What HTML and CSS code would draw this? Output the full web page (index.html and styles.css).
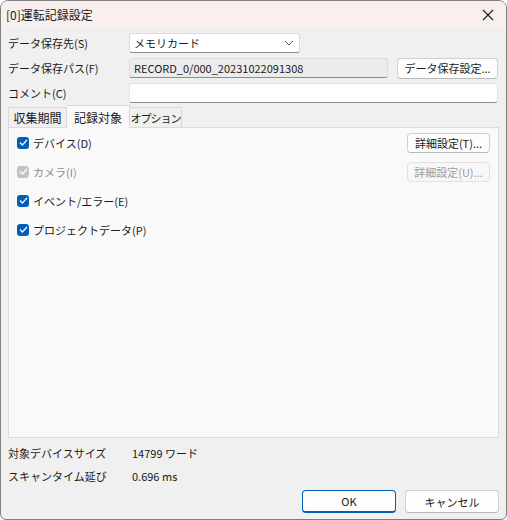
FILE: index.html
```html
<!DOCTYPE html>
<html lang="ja">
<head>
<meta charset="utf-8">
<link rel="stylesheet" href="styles.css">
</head>
<body>
<div class="window">
  <div class="titlebar">
    <span class="title">[0]運転記録設定</span>
    <svg class="close" width="12" height="12" viewBox="0 0 12 12"><path d="M1 1L11 11M11 1L1 11" stroke="#1a1a1a" stroke-width="1.1" fill="none"/></svg>
  </div>
  <div class="content">
    <div class="row r1">
      <span class="label">データ保存先(S)</span>
      <div class="combo"><span>メモリカード</span>
        <svg class="chev" width="10" height="6" viewBox="0 0 10 6"><path d="M1 1L5 5L9 1" stroke="#606060" stroke-width="1" fill="none"/></svg>
      </div>
    </div>
    <div class="row r2">
      <span class="label">データ保存パス(F)</span>
      <div class="field ro">RECORD_0/000_20231022091308</div>
      <button class="btn wide">データ保存設定...</button>
    </div>
    <div class="row r3">
      <span class="label">コメント(C)</span>
      <div class="field full"></div>
    </div>
    <div class="tabs">
      <div class="tab first">収集期間</div>
      <div class="tab sel">記録対象</div>
      <div class="tab last">オプション</div>
    </div>
    <div class="panel">
      <div class="crow">
        <span class="cb"><svg width="9" height="7" viewBox="0 0 9 7"><path d="M1 3.5L3.4 6L8 1" stroke="#fff" stroke-width="1.2" fill="none"/></svg></span>
        <span class="clabel">デバイス(D)</span>
        <button class="btn small">詳細設定(T)...</button>
      </div>
      <div class="crow dis">
        <span class="cb"><svg width="9" height="7" viewBox="0 0 9 7"><path d="M1 3.5L3.4 6L8 1" stroke="#fff" stroke-width="1.2" fill="none"/></svg></span>
        <span class="clabel">カメラ(I)</span>
        <button class="btn small disabled">詳細設定(U)...</button>
      </div>
      <div class="crow">
        <span class="cb"><svg width="9" height="7" viewBox="0 0 9 7"><path d="M1 3.5L3.4 6L8 1" stroke="#fff" stroke-width="1.2" fill="none"/></svg></span>
        <span class="clabel">イベント/エラー(E)</span>
      </div>
      <div class="crow">
        <span class="cb"><svg width="9" height="7" viewBox="0 0 9 7"><path d="M1 3.5L3.4 6L8 1" stroke="#fff" stroke-width="1.2" fill="none"/></svg></span>
        <span class="clabel">プロジェクトデータ(P)</span>
      </div>
    </div>
    <div class="info first-info">
      <span class="ilabel">対象デバイスサイズ</span><span>14799 ワード</span>
    </div>
    <div class="info">
      <span class="ilabel">スキャンタイム延び</span><span>0.696 ms</span>
    </div>
    <div class="footer">
      <button class="btn dlg ok">OK</button>
      <button class="btn dlg">キャンセル</button>
    </div>
  </div>
</div>
</body>
</html>
```
FILE: styles.css
```css
* { box-sizing: border-box; }
html, body { margin: 0; padding: 0; background: #ffffff; }
body {
  width: 507px; height: 520px; overflow: hidden;
  font-family: "Noto Sans CJK JP", "Noto Sans", sans-serif;
  font-size: 11px; color: #1a1a1a;
}
.window {
  width: 507px; height: 520px;
  border: 1px solid #7f7f7f;
  border-radius: 8px 8px 6px 6px;
  background: #f0f0f0;
  overflow: hidden;
  display: flex; flex-direction: column;
}
.titlebar {
  height: 27px; flex: none;
  background: #f9efee;
  display: flex; align-items: center; justify-content: space-between;
  padding: 0 10px 0 5px;
}
.title { font-size: 12px; color: #1a1a1a; }
.close { margin-right: 2px; }
.content { padding: 5px 7px 0 7px; display: flex; flex-direction: column; }
.row { display: flex; align-items: center; height: 20px; }
.r2, .r3 { margin-top: 5px; }
.label { width: 121px; flex: none; }
.combo {
  width: 171px; height: 20px;
  background: #fff; border: 1px solid #dadada; border-bottom-color: #8c8c8c;
  border-radius: 3px;
  display: flex; align-items: center; justify-content: space-between;
  padding: 0 4px 0 4px;
}
.chev { margin-right: 1px; }
.field {
  height: 20px; background: #fff;
  border: 1px solid #e3e3e3; border-bottom-color: #8c8c8c;
  border-radius: 3px; padding: 0 4px; display: flex; align-items: center;
}
.field.ro { width: 259px; background: #ececec; border-color: #dcdcdc; border-bottom-color: #8c8c8c; }
.field.full { width: 369px; }
.btn {
  font-family: inherit; font-size: 11px; color: #1a1a1a;
  background: #fdfdfd; border: 1px solid #d0d0d0; border-bottom-color: #b8b8b8;
  border-radius: 4px; padding: 0; margin: 0;
  display: flex; align-items: center; justify-content: center;
  white-space: nowrap;
}
.btn.wide { width: 101px; height: 21px; margin-left: 9px; }
.tabs { display: flex; align-items: flex-end; height: 22px; margin-top: 2px; position: relative; z-index: 1; }
.tab {
  height: 20px; padding: 0; background: #f0f0f0;
  border: 1px solid #d9d9d9; border-bottom: none; border-left: none;
  display: flex; align-items: center; justify-content: center;
  font-size: 12px; white-space: nowrap;
}
.tab.first { border-left: 1px solid #d9d9d9; width: 59px; }
.tab.sel { height: 23px; background: #f9f9f9; width: 63px; margin-bottom: -1px; }
.tab.last { width: 52px; font-size: 11px; letter-spacing: -1px; }
.panel {
  width: 491px; height: 311px;
  background: #f9f9f9; border: 1px solid #dcdcdc;
  padding: 0 8px 0 8px;
  display: flex; flex-direction: column;
}
.crow { display: flex; align-items: center; height: 29px; }
.cb {
  width: 12px; height: 12px; border-radius: 3px; background: #005fb8;
  display: flex; align-items: center; justify-content: center; flex: none;
}
.clabel { margin-left: 4px; flex: 1; }
.dis .cb { background: #c4c4c4; }
.dis .clabel { color: #8d8d8d; }
.btn.small { width: 83px; height: 20px; }
.btn.disabled { color: #9d9d9d; border-color: #e2e2e2; background: #f7f7f7; }
.info { display: flex; align-items: center; height: 23px; }
.first-info { margin-top: 3px; }
.ilabel { width: 124px; flex: none; }
.footer { display: flex; justify-content: flex-end; gap: 9px; margin-top: 3px; }
.btn.dlg { width: 94px; height: 23px; }
.btn.ok { border: 1px solid #005fb8; border-bottom: 2px solid #005fb8; }
```
